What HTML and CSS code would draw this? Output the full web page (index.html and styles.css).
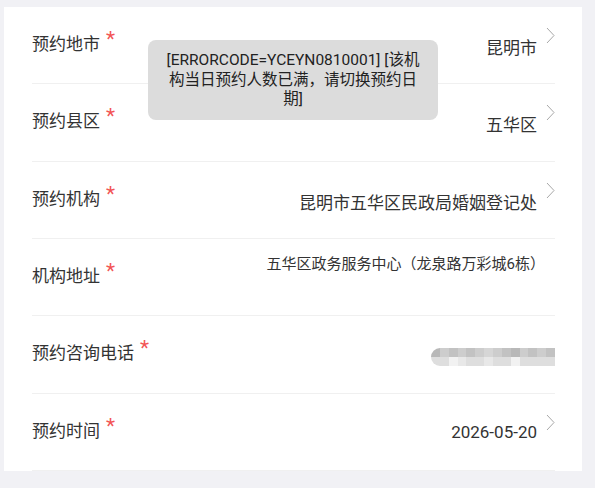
FILE: index.html
```html
<!DOCTYPE html>
<html lang="zh">
<head>
<meta charset="utf-8">
<link rel="stylesheet" href="styles.css">
</head>
<body>
<div class="card">
  <div class="row">
    <div class="label">预约地市<span class="req">*</span></div>
    <div class="right">
      <span class="value">昆明市</span>
      <svg class="chev" viewBox="0 0 9 17" width="9" height="17"><path d="M1 1 L8 8.5 L1 16" fill="none" stroke="#a8a8a8" stroke-width="1"/></svg>
    </div>
  </div>
  <div class="row">
    <div class="label">预约县区<span class="req">*</span></div>
    <div class="right">
      <span class="value">五华区</span>
      <svg class="chev" viewBox="0 0 9 17" width="9" height="17"><path d="M1 1 L8 8.5 L1 16" fill="none" stroke="#a8a8a8" stroke-width="1"/></svg>
    </div>
  </div>
  <div class="row">
    <div class="label">预约机构<span class="req">*</span></div>
    <div class="right">
      <span class="value">昆明市五华区民政局婚姻登记处</span>
      <svg class="chev" viewBox="0 0 9 17" width="9" height="17"><path d="M1 1 L8 8.5 L1 16" fill="none" stroke="#a8a8a8" stroke-width="1"/></svg>
    </div>
  </div>
  <div class="row">
    <div class="label">机构地址<span class="req">*</span></div>
    <div class="right">
      <span class="addr">五华区政务服务中心（龙泉路万彩城6栋）</span>
    </div>
  </div>
  <div class="row">
    <div class="label">预约咨询电话<span class="req">*</span></div>
    <div class="right">
      <div class="blur">
        <i class="a"></i><i class="b"></i><i class="c"></i><i class="b"></i><i class="c"></i><i class="b"></i><i class="d"></i><i class="b"></i><i class="c"></i><i class="a"></i><i class="b"></i><i class="c"></i><i class="b"></i><i class="c"></i>
        <i class="e"></i><i class="e"></i><i class="f"></i><i class="g"></i><i class="e"></i><i class="e"></i><i class="g"></i><i class="e"></i><i class="e"></i><i class="f"></i><i class="e"></i><i class="e"></i><i class="e"></i><i class="e"></i>
      </div>
    </div>
  </div>
  <div class="row">
    <div class="label">预约时间<span class="req">*</span></div>
    <div class="right">
      <span class="value date">2026-05-20</span>
      <svg class="chev" viewBox="0 0 9 17" width="9" height="17"><path d="M1 1 L8 8.5 L1 16" fill="none" stroke="#a8a8a8" stroke-width="1"/></svg>
    </div>
  </div>
</div>
<div class="toast">[ERRORCODE=YCEYN0810001] [该机<br>构当日预约人数已满，请切换预约日<br>期]</div>
</body>
</html>
```

FILE: styles.css
```css
html, body {
  margin: 0;
  padding: 0;
}
body {
  background: #f1f1f5;
  font-family: Roboto, "Noto Sans CJK SC", sans-serif;
  color: #333;
  width: 595px;
  height: 488px;
  overflow: hidden;
}
.card {
  background: #fff;
  margin: 7px 13px 0 4px;
  padding: 0 27px 0 28px;
}
.row {
  box-sizing: border-box;
  height: 77.33px;
  border-bottom: 1px solid #f0f0f0;
  display: flex;
  justify-content: space-between;
  align-items: flex-start;
}
.label {
  font-size: 17px;
  line-height: 24px;
  margin-top: 20px;
  color: #333;
  white-space: nowrap;
}
.req {
  color: #f25555;
  font-size: 21px;
  margin-left: 6px;
  vertical-align: 4px;
}
.right {
  display: flex;
  align-items: flex-start;
  gap: 9px;
}
.value {
  font-size: 17px;
  line-height: 24px;
  margin-top: 29px;
  color: #333;
  white-space: nowrap;
}
.value.date {
  margin-top: 26px;
}
.chev {
  display: block;
  margin-top: 20px;
}
.addr {
  font-size: 15px;
  line-height: 20px;
  margin-top: 15px;
  margin-right: 10px;
  white-space: nowrap;
}
.blur {
  margin-top: 32px;
  width: 124px;
  height: 18px;
  display: grid;
  grid-template-columns: repeat(14, 1fr);
  grid-template-rows: 9px 9px;
  border-radius: 9px 0 0 9px;
  overflow: hidden;
}
.blur i { display: block; }
.blur .a { background: #b8b8b8; }
.blur .b { background: #cdcdcd; }
.blur .c { background: #c2c2c2; }
.blur .d { background: #d6d6d6; }
.blur .e { background: #dedede; }
.blur .f { background: #f2f2f2; }
.blur .g { background: #e8e8e8; }
.toast {
  position: absolute;
  left: 148px;
  top: 40px;
  width: 290px;
  height: 80px;
  box-sizing: border-box;
  padding-top: 11px;
  background: #dcdcdc;
  border-radius: 8px;
  text-align: center;
  font-size: 15.5px;
  line-height: 19.5px;
  color: #222;
  white-space: nowrap;
}
```
